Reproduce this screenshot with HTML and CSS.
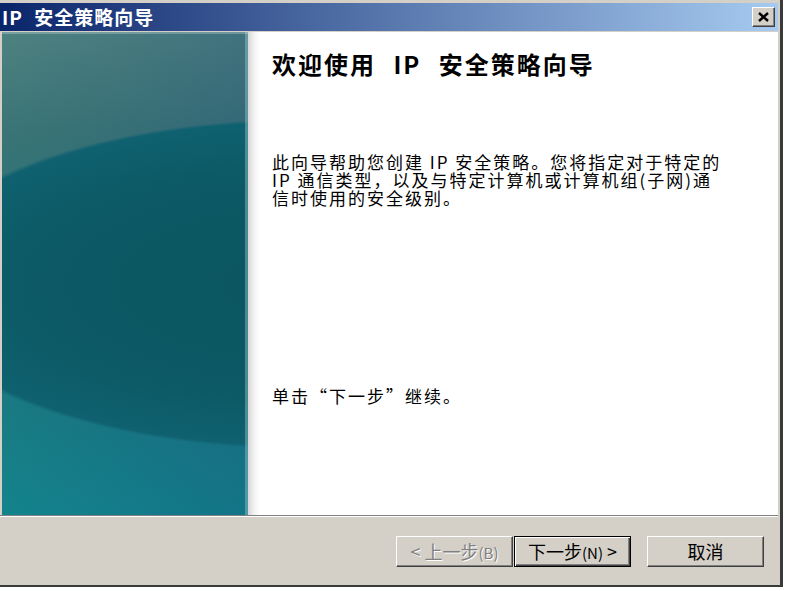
FILE: index.html
```html
<!DOCTYPE html>
<html lang="zh-CN">

<head>
    <meta charset="UTF-8">
    <title>IP 安全策略向导</title>
    <link rel="stylesheet" href="styles.css">
</head>

<body>
    <div class="window">
        <div class="titlebar">
            <span class="title">IP 安全策略向导</span>
            <button class="close" type="button">
                <svg width="11" height="10" viewBox="0 0 11 10">
                    <path d="M1 1 L10 9 M10 1 L1 9" stroke="#000" stroke-width="2.4" fill="none" />
                </svg>
            </button>
        </div>
        <div class="main">
            <div class="side"></div>
            <div class="content">
                <h1 class="heading">欢迎使用 IP 安全策略向导</h1>
                <p class="intro">此向导帮助您创建 IP 安全策略。您将指定对于特定的 IP 通信类型，以及与特定计算机或计算机组(子网)通信时使用的安全级别。</p>
                <p class="hint">单击“下一步”继续。</p>
            </div>
        </div>
        <div class="sep"></div>
        <div class="footer">
            <button class="btn disabled" type="button">&lt; 上一步<small>(B)</small></button>
            <button class="btn default" type="button">下一步<small>(N)</small> &gt;</button>
            <button class="btn cancel" type="button">取消</button>
        </div>
    </div>
</body>

</html>
```

FILE: styles.css
```css
body {
    margin: 0;
    background: #fff;
    font-family: "Noto Sans CJK SC", sans-serif;
    color: #000;
}

.window {
    width: 780px;
    height: 582px;
    padding-top: 3px;
    background: #d4d0c8;
    border-right: 3px solid #3a3a3a;
    border-bottom: 2px solid #3a3a3a;
    display: flex;
    flex-direction: column;
}

.titlebar {
    height: 28px;
    margin-right: 2px;
    padding: 0 3px 0 2px;
    background: linear-gradient(to right, #0a246a, #a6caf0);
    display: flex;
    align-items: center;
    justify-content: space-between;
}

.title {
    color: #fff;
    font-weight: bold;
    font-size: 19px;
    line-height: 28px;
    letter-spacing: 1px;
    word-spacing: 6px;
}

.close {
    width: 23px;
    height: 20px;
    padding: 0;
    background: #d4d0c8;
    border: 1px solid;
    border-color: #fff #404040 #404040 #fff;
    box-shadow: inset -1px -1px #808080;
    display: flex;
    align-items: center;
    justify-content: center;
}

.main {
    height: 483px;
    margin: 1px 2px 0 2px;
    display: flex;
}

.side {
    width: 246px;
    flex: none;
    background:
        radial-gradient(ellipse 400px 165px at 300px 252px, #0a5560 0, #0c5a66 70%, #0f6170 98%, rgba(15, 97, 112, 0) 100%),
        linear-gradient(to right, rgba(0, 0, 0, 0), rgba(20, 60, 120, .22)),
        linear-gradient(to bottom, #4e8280 0%, #3b7576 20%, #1f7078 55%, #13848c 100%);
    box-shadow: inset 0 2px rgba(255, 255, 255, .25), inset -3px 0 rgba(150, 200, 205, .45);
}

.content {
    flex: 1;
    padding: 18px 0 0 24px;
    background: linear-gradient(to right, #d6d6d6 0, #f2f2f2 6px, #fff 12px);
}

.heading {
    margin: 0;
    font-size: 24px;
    line-height: 28px;
    letter-spacing: 2px;
    word-spacing: 10px;
}

.intro {
    width: 451px;
    margin: 75px 0 0 0;
    font-size: 17px;
    line-height: 18px;
    letter-spacing: 2px;
}

.hint {
    margin: 179px 0 0 0;
    font-size: 17px;
    line-height: 20px;
    letter-spacing: 2px;
}

.sep {
    margin-right: 2px;
    border-top: 1px solid #808080;
    border-bottom: 1px solid #fff;
}

.footer {
    flex: 1;
    display: flex;
    justify-content: flex-end;
    align-items: flex-start;
    padding: 19px 16px 0 0;
}

.btn {
    width: 117px;
    height: 31px;
    padding: 0;
    box-sizing: border-box;
    background: #d4d0c8;
    border: 1px solid;
    border-color: #fff #404040 #404040 #fff;
    box-shadow: inset -1px -1px #808080;
    font-family: "Noto Sans CJK SC", sans-serif;
    font-size: 18px;
    line-height: 27px;
    color: #000;
}

.btn small {
    font-size: 15px;
}

.disabled {
    color: #808080;
    text-shadow: 1px 1px #fff;
}

.default {
    margin-left: 1px;
    border-color: #000;
    box-shadow: inset 1px 1px #fff, inset -1px -1px #404040, inset -2px -2px #808080;
}

.cancel {
    margin-left: 16px;
}
```
